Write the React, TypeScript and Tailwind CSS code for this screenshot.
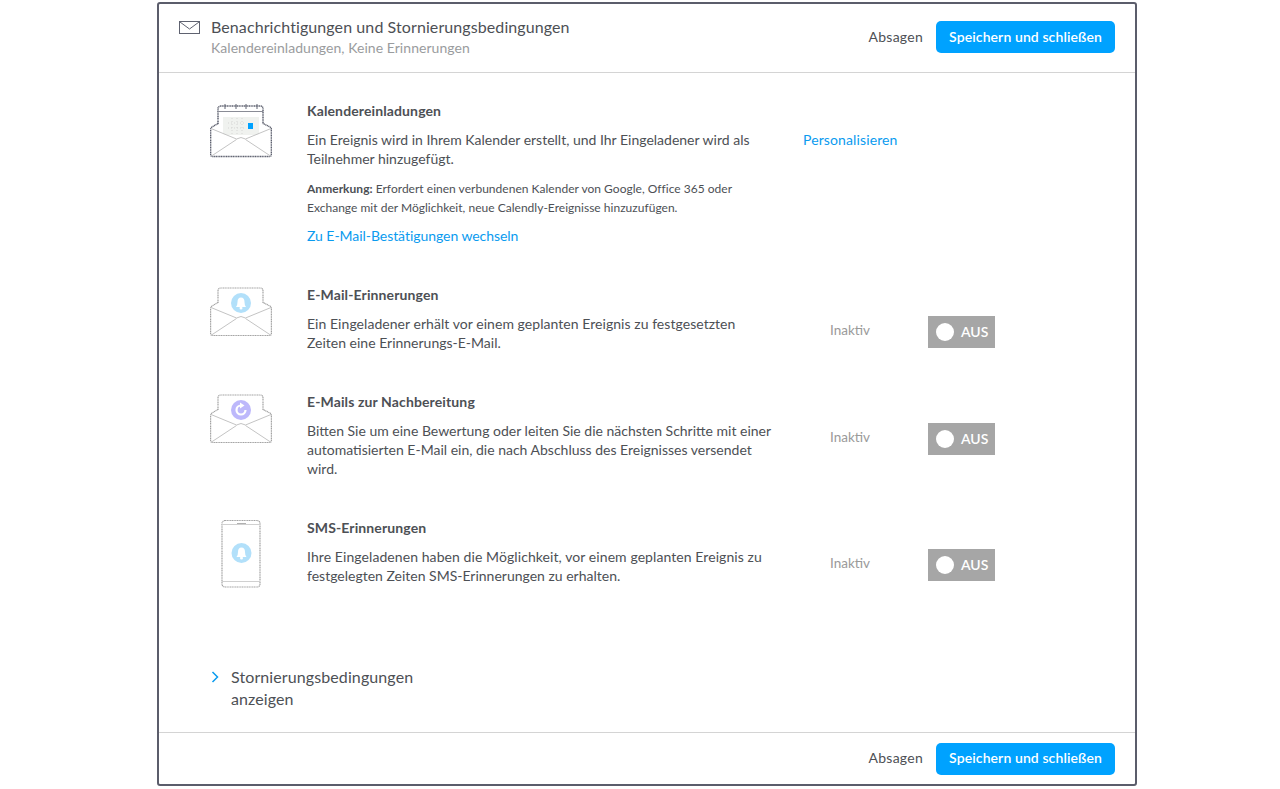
import React from "react";

const font = { fontFamily: "Lato, 'Liberation Sans', sans-serif" };

function Env({
  stroke,
  children,
  extra = 0,
  top = 1,
  sw = 1.2,
  className = "",
}: {
  stroke: string;
  children: React.ReactNode;
  extra?: number;
  top?: number;
  sw?: number;
  className?: string;
}) {
  return (
    <svg width="62" height={51 + extra} viewBox={`0 0 62 ${51 + extra}`} fill="none" className={`block ${className}`}>
      <path
        d={`M8 ${16 + extra} V${top + 3} Q8 ${top} 11 ${top} H50 Q53 ${top} 53 ${top + 3} V${16 + extra}`}
        stroke={stroke}
        strokeWidth={sw}
        strokeDasharray="1.2 0.5"
      />
      {children}
      <g transform={`translate(0 ${extra})`}>
        <path d="M0.600 21 L27 31.500 Q31 28.500 35 31.500 L61.400 21 V49 H0.600 Z" fill="#fff" />
        <path
          d="M8 15.500 L2 19 Q0.600 20 0.600 21.500 V46.500 Q0.600 48.500 2.600 48.500 H59.400 Q61.400 48.500 61.400 46.500 V21.500 Q61.400 20 60 19 L53 15.500"
          stroke={stroke}
          strokeWidth={sw}
          strokeDasharray="1.2 0.5"
        />
        <path d="M1 20.500 L26.500 31 Q31 28 35.500 31 L61 20.500" stroke="#c4c4c4" strokeWidth="1" />
        <path d="M1.500 48 L26.500 31.500 M60.500 48 L35.500 31.500" stroke="#c4c4c4" strokeWidth="1" />
      </g>
    </svg>
  );
}

function Bell({ cx, cy, r }: { cx: number; cy: number; r: number }) {
  const s = r / 10;
  return (
    <g transform={`translate(${cx} ${cy}) scale(${s})`}>
      <circle r="10" fill="#b2e0fa" />
      <path d="M-5 4 Q-3.500 2.500 -3.500 -1 Q-3.500 -5.500 0 -5.500 Q3.500 -5.500 3.500 -1 Q3.500 2.500 5 4 Z" fill="#fff" />
      <circle cy="5" r="1.500" fill="#fff" />
    </g>
  );
}

function CalendarIcon() {
  return (
    <Env stroke="#5f6270" extra={5} top={3} sw={1.5} className="mt-[2px]">
      <path d="M8 8.500 H53" stroke="#8a8c96" strokeWidth="1" />
      <path d="M15 1 V6 M26 1 V6 M36 1 V6 M47 1 V6" stroke="#5f6270" strokeWidth="1" />
      <rect x="13" y="14" width="36" height="18" fill="#f0f2ef" />
      <path d="M18 20 h16 M18 25 h16 M22 15 v16 M27 15 v16 M32 15 v16" stroke="#cfcfcf" strokeWidth="0.800" strokeDasharray="1 2" />
      <rect x="38" y="20" width="5" height="6" fill="#00a2ff" />
    </Env>
  );
}

function BellMail() {
  return (
    <Env stroke="#a3a3a3" className="mt-[2px]">
      <Bell cx={31} cy={16} r={10} />
    </Env>
  );
}

function FollowMail() {
  return (
    <Env stroke="#a3a3a3" className="mt-[2px]">
      <circle cx="31" cy="16" r="10" fill="#bdb8fb" />
      <path d="M35.500 16 A4.500 4.500 0 1 1 31 11.500" stroke="#fff" strokeWidth="2.200" />
      <path d="M30 8.500 L34.500 11.500 L30 14.500 Z" fill="#fff" />
    </Env>
  );
}

function Phone() {
  return (
    <svg width="40" height="68" viewBox="0 0 40 68" fill="none" className="mt-[2px] block">
      <rect x="1" y="0.500" width="38" height="66.500" rx="3" stroke="#a3a3a3" strokeWidth="1.200" strokeDasharray="1.200 0.500" />
      <path d="M1 4.500 H39 M1 61.500 H39" stroke="#d0d0d0" strokeWidth="1" />
      <path d="M16 3.500 H25" stroke="#b0b0b0" strokeWidth="1" />
      <Bell cx={20.500} cy={33} r={10} />
    </svg>
  );
}

function Toggle() {
  return (
    <div className="flex h-8 w-[67px] items-center bg-[#a6a6a6] pl-[8px] text-white">
      <span className="h-[18px] w-[18px] rounded-full bg-white" />
      <span className="ml-[7px] text-[14px] font-semibold leading-none">AUS</span>
    </div>
  );
}

function Actions() {
  return (
    <div className="flex items-center">
      <span className="mr-[13px] pb-[2px] text-[14px] tracking-[0.25px] text-[#4d5055]">Absagen</span>
      <button className="h-8 w-[179px] rounded-[5px] bg-[#00a2ff] pb-[2px] text-[14px] font-semibold tracking-[0.1px] text-white">
        Speichern und schließen
      </button>
    </div>
  );
}

const titleCls = "text-[14px] font-bold leading-[19px] tracking-[0.12px] text-[#4d5055]";
const bodyCls = "mt-[10px] text-[14px] leading-[19px] text-[#4d5055]";

function Row({ icon, title, lines, track = "" }: { icon: React.ReactNode; title: string; lines: string[]; track?: string }) {
  return (
    <div className="mt-[40px] flex">
      <div className="w-[97px] shrink-0">{icon}</div>
      <div className="w-[496px] shrink-0">
        <div className={titleCls}>{title}</div>
        <div className={bodyCls}>
          {lines.map((l, i) => (
            <div key={l} className={i === 0 ? track : ""}>
              {l}
            </div>
          ))}
        </div>
      </div>
      <div className="w-[125px] shrink-0 pl-[27px] pt-[36px] text-[13.500px] leading-[19px] text-[#9a9a9a]">Inaktiv</div>
      <div className="pt-[31px]">
        <Toggle />
      </div>
    </div>
  );
}

export default function App() {
  return (
    <div className="flex h-[789px] bg-white pl-[157px] pt-[2px]" style={font}>
      <div className="flex h-[784px] w-[980px] flex-col rounded-[3px] border-2 border-[#5b5d6b] bg-white">
        <header className="flex h-[69px] shrink-0 items-start justify-between border-b border-[#d4d4d4] pl-5 pr-5">
          <div className="flex pt-[13px]">
            <svg width="21" height="13" viewBox="0 0 21 13" fill="none" className="mt-[4px]">
              <rect x="0.500" y="0.500" width="20" height="12" stroke="#5f6270" />
              <path d="M1 1 L10.500 8 L20 1" stroke="#5f6270" />
            </svg>
            <div className="ml-[11px]">
              <div className="text-[16px] leading-[20px] tracking-[0.09px] text-[#4d5055]">Benachrichtigungen und Stornierungsbedingungen</div>
              <div className="mt-[1px] text-[14px] leading-[20px] tracking-[0.05px] text-[#9a9c9e]">Kalendereinladungen, Keine Erinnerungen</div>
            </div>
          </div>
          <div className="pt-[17px]">
            <Actions />
          </div>
        </header>

        <main className="min-h-0 flex-1 pl-[51px]">
          <div className="flex pt-[28px]">
            <div className="w-[97px] shrink-0">
              <CalendarIcon />
            </div>
            <div className="w-[496px] shrink-0">
              <div className={titleCls}>Kalendereinladungen</div>
              <div className={bodyCls}>
                <div>Ein Ereignis wird in Ihrem Kalender erstellt, und Ihr Eingeladener wird als</div>
                <div>Teilnehmer hinzugefügt.</div>
              </div>
              <div className="mt-[11px] text-[12px] leading-[19px] tracking-[0.02px] text-[#4d5055]">
                <div>
                  <span className="font-bold">Anmerkung:</span> Erfordert einen verbundenen Kalender von Google, Office 365 oder
                </div>
                <div>Exchange mit der Möglichkeit, neue Calendly-Ereignisse hinzuzufügen.</div>
              </div>
              <div className="mt-[9px] text-[14px] leading-[19px] tracking-[-0.05px] text-[#0a9bef]">Zu E-Mail-Bestätigungen wechseln</div>
            </div>
            <div className="pt-[29px] text-[14px] leading-[19px] tracking-[0.12px] text-[#0a9bef]">Personalisieren</div>
          </div>

          <Row
            icon={<BellMail />}
            title="E-Mail-Erinnerungen"
            track="tracking-[0.05px]"
            lines={["Ein Eingeladener erhält vor einem geplanten Ereignis zu festgesetzten", "Zeiten eine Erinnerungs-E-Mail."]}
          />
          <Row
            icon={<FollowMail />}
            title="E-Mails zur Nachbereitung"
            lines={[
              "Bitten Sie um eine Bewertung oder leiten Sie die nächsten Schritte mit einer",
              "automatisierten E-Mail ein, die nach Abschluss des Ereignisses versendet",
              "wird.",
            ]}
          />
          <Row
            icon={
              <div className="pl-[11px]">
                <Phone />
              </div>
            }
            title="SMS-Erinnerungen"
            track="tracking-[0.08px]"
            lines={["Ihre Eingeladenen haben die Möglichkeit, vor einem geplanten Ereignis zu", "festgelegten Zeiten SMS-Erinnerungen zu erhalten."]}
          />

          <div className="mt-[78px] flex">
            <svg width="8" height="12" viewBox="0 0 8 12" fill="none" className="ml-[1px] mt-[5px]">
              <path d="M1.500 1 L6.500 6 L1.500 11" stroke="#0a9bef" strokeWidth="1.500" />
            </svg>
            <div className="ml-[12px] text-[16px] leading-[22px] tracking-[0.1px] text-[#4d5055]">
              <div>Stornierungsbedingungen</div>
              <div>anzeigen</div>
            </div>
          </div>
        </main>

        <footer className="flex h-[52px] shrink-0 items-center justify-end border-t border-[#d4d4d4] pr-5">
          <Actions />
        </footer>
      </div>
    </div>
  );
}
